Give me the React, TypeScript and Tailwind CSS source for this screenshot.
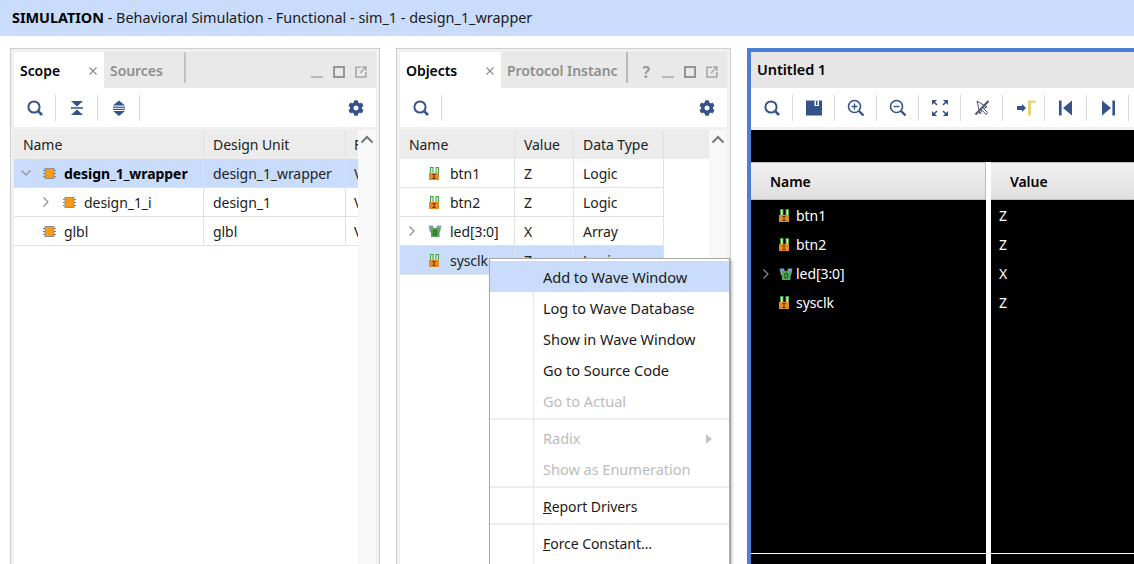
import { FaCog } from "react-icons/fa";

const NAVY = "#34538a";

function SearchIcon() {
  return (
    <svg width="18" height="18" viewBox="0 0 18 18" fill="none">
      <circle cx="8" cy="8" r="5.6" stroke={NAVY} strokeWidth="2" />
      <path d="M12.4 12.4 L16 16" stroke={NAVY} strokeWidth="2.6" />
    </svg>
  );
}
function CollapseIcon() {
  return (
    <svg width="16" height="16" viewBox="0 0 16 16" fill={NAVY}>
      <path d="M2 1h12L8 6.5z" />
      <rect x="2" y="7.2" width="12" height="1.5" />
      <path d="M2 15h12L8 9.5z" />
    </svg>
  );
}
function ExpandIcon() {
  return (
    <svg width="14" height="18" viewBox="0 0 14 18" fill={NAVY}>
      <path d="M1 6.5 L7 1.5 L13 6.5z" />
      <rect x="1" y="7.6" width="12" height="1.2" />
      <rect x="1" y="9.8" width="12" height="1.2" />
      <path d="M1 12 L7 17 L13 12z" />
    </svg>
  );
}
function SaveIcon() {
  return (
    <svg width="16" height="16" viewBox="0 0 16 16">
      <path d="M0 0.5h16v15H0z" fill={NAVY} />
      <rect x="8.5" y="0.5" width="4.5" height="5.5" fill="#ffffff" />
      <rect x="10" y="1" width="1.5" height="4" fill={NAVY} />
    </svg>
  );
}
function ZoomInIcon({ plus }: { plus: boolean }) {
  return (
    <svg width="18" height="18" viewBox="0 0 18 18" fill="none">
      <circle cx="7.5" cy="7.5" r="6" stroke={NAVY} strokeWidth="1.6" />
      <path d="M4.5 7.5h6" stroke={NAVY} strokeWidth="1.4" />
      {plus ? <path d="M7.5 4.5v6" stroke={NAVY} strokeWidth="1.4" /> : null}
      <path d="M12 12 L16.5 16.5" stroke={NAVY} strokeWidth="2.4" />
    </svg>
  );
}
function FitIcon() {
  return (
    <svg width="16" height="16" viewBox="0 0 16 16" fill={NAVY}>
      <path d="M0 0h5L0 5z" />
      <path d="M16 0h-5l5 5z" />
      <path d="M0 16h5L0 11z" />
      <path d="M16 16h-5l5-5z" />
      <path d="M2 2l3 3" stroke={NAVY} strokeWidth="1.6" />
      <path d="M14 2l-3 3" stroke={NAVY} strokeWidth="1.6" />
      <path d="M2 14l3-3" stroke={NAVY} strokeWidth="1.6" />
      <path d="M14 14l-3-3" stroke={NAVY} strokeWidth="1.6" />
    </svg>
  );
}
function CursorOffIcon() {
  return (
    <svg width="16" height="16" viewBox="0 0 16 16" fill="none">
      <path d="M3 1 L6 14 L8 10 L12 14.5 L13.5 12.5 L9.5 8.5 L13 7z" stroke={NAVY} strokeWidth="1" fill="#ffffff" />
      <path d="M14.5 1 L1.5 14.5" stroke="#555555" strokeWidth="2" />
    </svg>
  );
}
function MarkerIcon() {
  return (
    <svg className="ml-[4px]" width="19" height="16" viewBox="0 0 19 16">
      <rect x="0" y="6" width="5" height="4" fill={NAVY} />
      <path d="M5 4 L9 8 L5 12z" fill={NAVY} />
      <path d="M11 15.5V0.5h7.5v2.5H14v12.5z" fill="#e8d37a" />
    </svg>
  );
}
function FirstIcon() {
  return (
    <svg width="14" height="16" viewBox="0 0 14 16" fill={NAVY}>
      <rect x="0" y="0.5" width="2.6" height="15" />
      <path d="M13 0.5v15L4 8z" />
    </svg>
  );
}
function LastIcon() {
  return (
    <svg width="14" height="16" viewBox="0 0 14 16" fill={NAVY}>
      <path d="M1 0.5v15L10 8z" />
      <rect x="11.4" y="0.5" width="2.6" height="15" />
    </svg>
  );
}
function ModuleIcon() {
  return (
    <svg width="13" height="13" viewBox="0 0 13 13">
      <path d="M0 3.5h13M0 6.5h13M0 9.5h13" stroke="#808080" strokeWidth="1" />
      <rect x="1.5" y="1" width="10" height="11" fill="#8f8f8f" />
      <rect x="2.5" y="2" width="8" height="9" fill="#f79a16" />
    </svg>
  );
}
function PortIcon() {
  return (
    <svg width="11" height="13" viewBox="0 0 11 13">
      <rect x="1.5" y="0.5" width="2.5" height="6.5" fill="#d9efd9" stroke="#3fa23f" strokeWidth="1" />
      <rect x="7" y="0.5" width="2.5" height="7.5" fill="#d9efd9" stroke="#3fa23f" strokeWidth="1" />
      <rect x="0" y="6" width="10" height="7" fill="#e58a24" />
      <path d="M3.5 7.5h3M5 7.5v4M3.5 11.5h3" stroke="#5a3000" strokeWidth="1" fill="none" />
    </svg>
  );
}
function ArrayIcon() {
  return (
    <svg width="14" height="12" viewBox="0 0 14 12">
      <path d="M0.5 0.5h4.5l1 3v4H2z" fill="#7f9fb3" />
      <path d="M13.5 0.5H9l-1 3v4h4z" fill="#7f9fb3" />
      <rect x="3" y="3" width="8.5" height="9" fill="#56a456" />
      <path d="M5.8 5.5h2.6v4.5H5.8z" fill="none" stroke="#1d5a1d" strokeWidth="1" />
    </svg>
  );
}
function Chevron({ down, color = "#8f8f8f" }: { down?: boolean; color?: string }) {
  return (
    <svg width="10" height="12" viewBox="0 0 10 12" fill="none">
      <path d={down ? "M0.5 3.5 L5 8 L9.5 3.5" : "M2.5 1.5 L7 6 L2.5 10.5"} stroke={color} strokeWidth="1.2" />
    </svg>
  );
}
function ScrollUp() {
  return (
    <svg width="14" height="9" viewBox="0 0 14 9" fill="none">
      <path d="M1.5 7.5 L7 2 L12.5 7.5" stroke="#777777" strokeWidth="2" />
    </svg>
  );
}
function CloseX() {
  return (
    <svg className="absolute right-[7px] top-[15px]" width="8" height="8" viewBox="0 0 8 8" fill="none">
      <path d="M0.5 0.5 L7.5 7.5 M7.5 0.5 L0.5 7.5" stroke="#8a8a8a" strokeWidth="1.1" />
    </svg>
  );
}
function WindowControls() {
  return (
    <div className="flex items-center gap-[10px] pr-[9px]">
      <div className="w-[12px] h-[12px] flex items-end">
        <div className="w-full h-[2px] bg-[#b8b8b8]" />
      </div>
      <div className="w-[12px] h-[12px] border-2 border-[#959595]" />
      <svg width="12" height="12" viewBox="0 0 12 12" fill="none">
        <path d="M6 1.2H1v9.8h9.8V6" stroke="#a6a6a6" strokeWidth="1.6" />
        <path d="M5 7 L10 2 M7 1h4v4" stroke="#a6a6a6" strokeWidth="1.4" />
      </svg>
    </div>
  );
}
function ToolButton({ children, sep = true }: { children: React.ReactNode; sep?: boolean }) {
  return (
    <div className="relative w-[42px] h-full flex items-center justify-center shrink-0">
      {children}
      {sep ? <div className="absolute right-0 top-[7px] bottom-[6px] w-px bg-[#d9d9d9]" /> : null}
    </div>
  );
}
function Gear() {
  return (
    <div className="ml-auto pr-[12px] flex items-center">
      <FaCog size={16} color={NAVY} />
    </div>
  );
}
function ScrollBar() {
  return (
    <div className="w-[18px] shrink-0 bg-[#f8f8f8] flex justify-center pt-[5px]">
      <div className="h-[9px] flex">
        <ScrollUp />
      </div>
    </div>
  );
}
function Cell({ w, children, cls = "" }: { w: string; children: React.ReactNode; cls?: string }) {
  return <div className={`${w} shrink-0 h-full border-r border-[#e2e2e2] flex items-center overflow-hidden whitespace-nowrap ${cls}`}>{children}</div>;
}

const scopeRows = [
  { name: "design_1_wrapper", unit: "design_1_wrapper", bold: true, selected: true, chevron: "down", indent: false },
  { name: "design_1_i", unit: "design_1", bold: false, selected: false, chevron: "right", indent: true },
  { name: "glbl", unit: "glbl", bold: false, selected: false, chevron: "", indent: false },
];
const objectRows = [
  { name: "btn1", value: "Z", type: "Logic", arr: false, selected: false },
  { name: "btn2", value: "Z", type: "Logic", arr: false, selected: false },
  { name: "led[3:0]", value: "X", type: "Array", arr: true, selected: false },
  { name: "sysclk", value: "Z", type: "Logic", arr: false, selected: true },
];

function ScopePanel() {
  return (
    <div className="w-[370px] h-[600px] shrink-0 border border-[#cfcfcf] bg-[#f0f0f0] p-[3px] flex flex-col">
      <div className="h-[36px] bg-[#e9e9e9] flex items-stretch shrink-0">
        <div className="w-[90px] bg-white flex items-center pl-[6px] font-semibold text-[14px] text-black relative">
          Scope
          <CloseX />
        </div>
        <div className="w-[80px] flex items-center pl-[6px] font-semibold text-[14px] text-[#8f8f8f]">Sources</div>
        <div className="w-[2px] h-[31px] bg-[#c4c4c4]" />
        <div className="ml-auto flex items-center pt-[4px]">
          <WindowControls />
        </div>
      </div>
      <div className="h-[39px] bg-white flex items-stretch shrink-0">
        <ToolButton><SearchIcon /></ToolButton>
        <ToolButton><CollapseIcon /></ToolButton>
        <ToolButton><ExpandIcon /></ToolButton>
        <Gear />
      </div>
      <div className="flex flex-1 mt-[3px] min-h-0">
        <div className="w-[344px] bg-white overflow-hidden">
          <div className="h-[29px] bg-[#ececec] flex text-[14px] text-[#222222]">
            <Cell w="w-[190px]" cls="pl-[9px]">Name</Cell>
            <Cell w="w-[142px]" cls="pl-[9px]">Design Unit</Cell>
            <div className="pl-[8px] flex items-center">F</div>
          </div>
          {scopeRows.map((r) => (
            <div key={r.name} className={`h-[29px] flex text-[14px] text-[#222222] border-b border-[#e2e2e2] ${r.selected ? "bg-[#c9dcfb]" : "bg-white"}`}>
              <Cell w="w-[190px]">
                <div className={`flex items-center ${r.indent ? "pl-[27px]" : "pl-[7px]"}`}>
                  <div className="w-[10px] flex">
                    {r.chevron === "down" ? <Chevron down /> : r.chevron === "right" ? <Chevron /> : null}
                  </div>
                  <div className="ml-[12px] flex"><ModuleIcon /></div>
                  <span className={`ml-[8px] ${r.bold ? "font-bold text-black" : ""}`}>{r.name}</span>
                </div>
              </Cell>
              <Cell w="w-[142px]" cls="pl-[9px]">{r.unit}</Cell>
              <div className="pl-[8px] flex items-center">V</div>
            </div>
          ))}
        </div>
        <ScrollBar />
      </div>
    </div>
  );
}

function ObjectsPanel() {
  return (
    <div className="w-[335px] h-[600px] shrink-0 border border-[#cfcfcf] bg-[#f0f0f0] p-[3px] flex flex-col">
      <div className="h-[36px] bg-[#e9e9e9] flex items-stretch shrink-0">
        <div className="w-[101px] bg-white flex items-center pl-[6px] font-semibold text-[14px] text-black relative">
          Objects
          <CloseX />
        </div>
        <div className="w-[125px] flex items-center pl-[6px] font-semibold text-[14px] text-[#8f8f8f] overflow-hidden whitespace-nowrap">Protocol Instanc</div>
        <div className="w-[2px] h-[31px] bg-[#b8b8b8]" />
        <div className="ml-auto flex items-center pt-[4px]">
          <span className="text-[16px] font-bold text-[#9a9a9a] mr-[12px] leading-none">?</span>
          <WindowControls />
        </div>
      </div>
      <div className="h-[39px] bg-white flex items-stretch shrink-0">
        <ToolButton><SearchIcon /></ToolButton>
        <Gear />
      </div>
      <div className="flex flex-1 mt-[3px] min-h-0">
        <div className="w-[309px] bg-white">
          <div className="h-[29px] bg-[#ececec] flex text-[14px] text-[#222222]">
            <Cell w="w-[115px]" cls="pl-[9px]">Name</Cell>
            <Cell w="w-[59px]" cls="pl-[9px]">Value</Cell>
            <Cell w="w-[90px]" cls="pl-[9px]">Data Type</Cell>
          </div>
          {objectRows.map((r) => (
            <div key={r.name} className="h-[29px] flex text-[14px] text-[#222222]">
              <div className={`flex border-b border-[#e2e2e2] ${r.selected ? "bg-[#c9dcfb]" : "bg-white"}`}>
                <Cell w="w-[115px]">
                  <div className="flex items-center pl-[7px]">
                    <div className="w-[10px] flex">{r.arr ? <Chevron /> : null}</div>
                    <div className={`w-[16px] flex ${r.arr ? "ml-[11px]" : "ml-[12px] -mr-px"}`}>{r.arr ? <ArrayIcon /> : <PortIcon />}</div>
                    <span className="ml-[6px]">{r.name}</span>
                  </div>
                </Cell>
                <Cell w="w-[59px]" cls="pl-[9px]">{r.value}</Cell>
                <Cell w="w-[90px]" cls="pl-[9px]">{r.type}</Cell>
              </div>
            </div>
          ))}
        </div>
        <ScrollBar />
      </div>
    </div>
  );
}

function WavePanel() {
  return (
    <div className="flex-1 min-w-0 h-[600px] border-l-4 border-t-4 border-[#4a7fd4] flex flex-col">
      <div className="h-[36px] bg-[#e6e6e6] flex items-center pl-[6px] font-semibold text-[14.5px] text-black shrink-0">Untitled 1</div>
      <div className="h-[39px] bg-white flex items-stretch shrink-0">
        <ToolButton><SearchIcon /></ToolButton>
        <ToolButton><SaveIcon /></ToolButton>
        <ToolButton><ZoomInIcon plus /></ToolButton>
        <ToolButton><ZoomInIcon plus={false} /></ToolButton>
        <ToolButton><FitIcon /></ToolButton>
        <ToolButton><CursorOffIcon /></ToolButton>
        <ToolButton><MarkerIcon /></ToolButton>
        <ToolButton><FirstIcon /></ToolButton>
        <ToolButton><LastIcon /></ToolButton>
      </div>
      <div className="h-[3px] bg-[#f0f0f0] shrink-0" />
      <div className="h-[32px] bg-black shrink-0" />
      <div className="flex flex-1 min-h-0 bg-white">
        <div className="w-[235px] shrink-0 flex flex-col">
          <div className="h-[38px] shrink-0 border-y border-[#bdbdbd] border-r bg-gradient-to-b from-[#f1f1f1] to-[#dfdfdf] flex items-center pl-[19px] font-semibold text-[14px] text-black">Name</div>
          <div className="h-[353px] shrink-0 bg-black pt-px text-[14px] text-white">
            {objectRows.map((r) => (
              <div key={r.name} className="h-[29px] flex items-center pl-[10px]">
                <div className="w-[10px] flex">{r.arr ? <Chevron /> : null}</div>
                <div className="w-[16px] ml-[8px] flex">{r.arr ? <ArrayIcon /> : <PortIcon />}</div>
                <span className="ml-[1px]">{r.name}</span>
              </div>
            ))}
          </div>
          <div className="h-px bg-white shrink-0" />
          <div className="flex-1 bg-black" />
        </div>
        <div className="w-[5px] shrink-0" />
        <div className="flex-1 min-w-0 flex flex-col">
          <div className="h-[38px] shrink-0 border-y border-[#bdbdbd] bg-gradient-to-b from-[#f1f1f1] to-[#dfdfdf] flex items-center pl-[19px] font-semibold text-[14px] text-black">Value</div>
          <div className="h-[353px] shrink-0 bg-black pt-px text-[14px] text-white">
            {objectRows.map((r) => (
              <div key={r.name} className="h-[29px] flex items-center pl-[8px]">{r.value}</div>
            ))}
          </div>
          <div className="h-px bg-white shrink-0" />
          <div className="flex-1 bg-black" />
        </div>
      </div>
    </div>
  );
}

function MenuItem({ label, disabled, active, arrow, ul }: { label: string; disabled?: boolean; active?: boolean; arrow?: boolean; ul?: boolean }) {
  return (
    <div className={`h-[31px] flex items-center pl-[53px] pr-[17px] pt-[2px] relative ${ul ? "text-[14px]" : "text-[14.6px]"} ${active ? "bg-[#c9dcfb]" : ""} ${disabled ? "text-[#bcbcbc]" : "text-[#1a1a1a]"}`}>
      {ul ? (
        <span>
          <span className="underline">{label[0]}</span>
          {label.slice(1)}
        </span>
      ) : (
        label
      )}
      {arrow ? (
        <svg className="ml-auto" width="6" height="10" viewBox="0 0 6 10">
          <path d="M0 0 L6 5 L0 10z" fill="#c4c4c4" />
        </svg>
      ) : null}
    </div>
  );
}
function MenuSep() {
  return (
    <div className="h-[6px] flex items-center">
      <div className="h-[2px] w-full bg-[#eeeeee]" />
    </div>
  );
}
function ContextMenu() {
  return (
    <div className="absolute left-[489px] top-[258px] w-[241px] bg-white border border-[#a8a8a8] border-b-0 pt-[2px] shadow-[2px_2px_3px_rgba(0,0,0,0.25)]">
      <div className="absolute left-[43px] top-[33px] bottom-0 w-px bg-[#e6e6e6]" />
      <MenuItem label="Add to Wave Window" active />
      <MenuItem label="Log to Wave Database" />
      <MenuItem label="Show in Wave Window" />
      <MenuItem label="Go to Source Code" />
      <MenuItem label="Go to Actual" disabled />
      <MenuSep />
      <MenuItem label="Radix" disabled arrow />
      <MenuItem label="Show as Enumeration" disabled />
      <MenuSep />
      <MenuItem label="Report Drivers" ul />
      <MenuSep />
      <MenuItem label="Force Constant..." ul />
      <div className="h-[31px]" />
    </div>
  );
}

export default function App() {
  return (
    <div className="relative w-[1134px] h-[564px] overflow-hidden bg-white font-['Noto_Sans','Open_Sans',sans-serif] tracking-[-0.06px]">
      <div className="h-[36px] bg-[#c9dcfb] flex items-center pl-[12px] text-[14.4px] tracking-normal text-[#1a1a1a]">
        <span className="font-bold text-black">SIMULATION</span>
        <span className="whitespace-pre"> - Behavioral Simulation - Functional - sim_1 - design_1_wrapper</span>
      </div>
      <div className="flex pt-[12px] pl-[10px] gap-[16px]">
        <ScopePanel />
        <ObjectsPanel />
        <WavePanel />
      </div>
      <ContextMenu />
    </div>
  );
}
